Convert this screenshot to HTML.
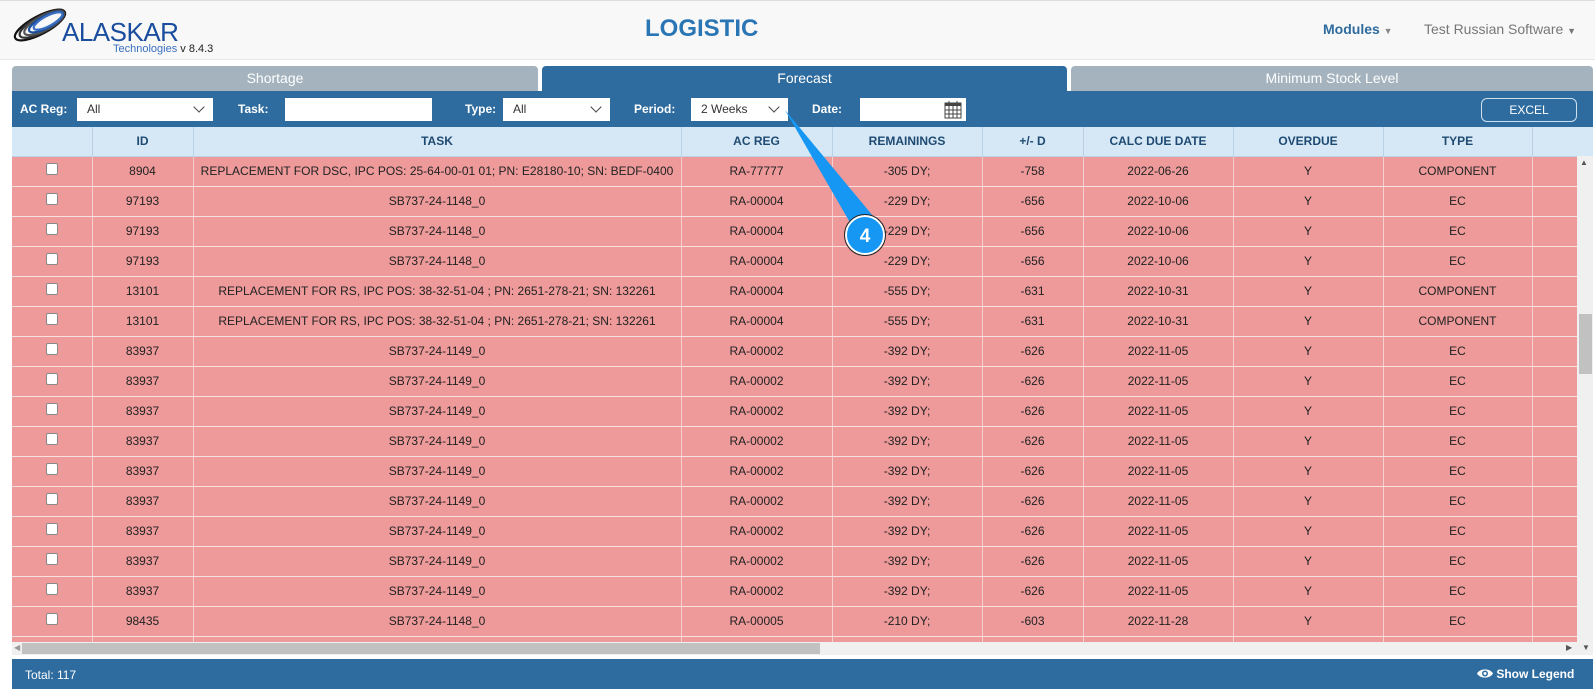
<!DOCTYPE html>
<html><head><meta charset="utf-8"><style>
*{box-sizing:border-box;margin:0;padding:0}
body{width:1595px;height:689px;overflow:hidden;background:#fff;font-family:"Liberation Sans",Arial,sans-serif;position:relative}
.abs{position:absolute}
#hdr{left:0;top:0;width:1595px;height:60px;background:#f8f8f8;border-top:1px solid #ddd;border-bottom:1px solid #e7e7e7}
.tab{top:66px;height:25px;color:#fff;font-size:14px;text-align:center;line-height:25px;border-radius:4px 4px 0 0}
#filt{left:12px;top:91px;width:1581px;height:36px;background:#2e6b9e}
.lbl{color:#fff;font-weight:bold;font-size:12px;top:102px}
.inp{background:#fff;height:23px;top:98px;font-size:12px;line-height:23px;padding-left:10px;color:#333}
.chev{position:absolute;right:10px;top:5px;width:8px;height:8px;border-right:1.5px solid #444;border-bottom:1.5px solid #444;transform:rotate(45deg)}
table{position:absolute;left:12px;top:127px;border-collapse:collapse;table-layout:fixed;width:1565px}
th{background:#d6e8f6;color:#1e4a72;font-size:12px;font-weight:bold;height:29px;border-right:1px solid #b9d2e6;border-bottom:1px solid #b9d2e6}
td{background:#ee9a9a;color:#222;font-size:12px;text-align:center;height:30px;border-right:1px solid #f6d0d0;border-bottom:1px solid #f8e0e0;white-space:nowrap;overflow:hidden}
.cb{display:inline-block;width:12px;height:12px;background:#fff;border:1px solid #888;border-radius:2px;vertical-align:middle;margin-top:-6px}
#foot{left:12px;top:659px;width:1581px;height:30px;background:#2e6b9e;color:#fff;font-size:12px}
</style></head><body>
<div id="hdr" class="abs"></div>
<svg class="abs" style="left:10px;top:6px" width="62" height="38" viewBox="0 0 62 38">
<g fill="none" stroke-width="2.2">
<ellipse cx="30" cy="19" rx="28" ry="9" transform="rotate(-28 30 19)" stroke="#111"/>
<ellipse cx="32" cy="18" rx="25" ry="8" transform="rotate(-28 32 18)" stroke="#333"/>
<ellipse cx="34" cy="17" rx="22" ry="7" transform="rotate(-28 34 17)" stroke="#555"/>
<ellipse cx="36" cy="16" rx="19" ry="6" transform="rotate(-28 36 16)" stroke="#1a4d9e"/>
<ellipse cx="38" cy="15" rx="16" ry="5" transform="rotate(-28 38 15)" stroke="#3a6fc0"/>
</g></svg>
<div class="abs" style="left:62px;top:17px;font-size:26px;color:#1a4d9e;letter-spacing:-0.5px">ALASKAR</div>
<div class="abs" style="left:113px;top:43px;font-size:11px;color:#3a6fc0">Technologies <span style="color:#222;font-size:11px">v 8.4.3</span></div>
<div class="abs" style="left:645px;top:15px;font-size:24px;font-weight:bold;color:#2a75b4">LOGISTIC</div>
<div class="abs" style="left:1323px;top:21px;font-size:14px;font-weight:bold;color:#2e6b9e">Modules <span style="font-size:9px;color:#888">▼</span></div>
<div class="abs" style="left:1424px;top:21px;font-size:14px;color:#777">Test Russian Software <span style="font-size:9px">▼</span></div>

<div class="abs tab" style="left:12px;width:526px;background:#a4b3bd">Shortage</div>
<div class="abs tab" style="left:542px;width:525px;background:#2e6b9e">Forecast</div>
<div class="abs tab" style="left:1071px;width:522px;background:#a4b3bd">Minimum Stock Level</div>
<div id="filt" class="abs"></div>
<div class="abs lbl" style="left:20px">AC Reg:</div>
<div class="abs inp" style="left:77px;width:136px">All<span class="chev"></span></div>
<div class="abs lbl" style="left:238px">Task:</div>
<div class="abs inp" style="left:285px;width:147px"></div>
<div class="abs lbl" style="left:465px">Type:</div>
<div class="abs inp" style="left:503px;width:107px">All<span class="chev"></span></div>
<div class="abs lbl" style="left:634px">Period:</div>
<div class="abs inp" style="left:691px;width:97px">2 Weeks<span class="chev"></span></div>
<div class="abs lbl" style="left:812px">Date:</div>
<div class="abs inp" style="left:860px;width:106px"><svg style="position:absolute;right:4px;top:2px" width="18" height="19" viewBox="0 0 18 19"><rect x="1" y="3" width="16" height="15" fill="#fff" stroke="#444"/><rect x="1" y="3" width="16" height="3" fill="#444"/><path d="M5 1v4M13 1v4M1 10h16M1 14h16M5 6v12M9 6v12M13 6v12" stroke="#444" fill="none"/></svg></div>
<div class="abs" style="left:1481px;top:98px;width:96px;height:24px;border:1px solid #cfe0ee;border-radius:6px;color:#fff;font-size:12px;text-align:center;line-height:22px">EXCEL</div>

<table>
<colgroup><col style="width:80px"><col style="width:101px"><col style="width:488px"><col style="width:151px"><col style="width:150px"><col style="width:101px"><col style="width:150px"><col style="width:150px"><col style="width:149px"><col style="width:45px"></colgroup>
<tr><th></th><th>ID</th><th>TASK</th><th>AC REG</th><th>REMAININGS</th><th>+/- D</th><th>CALC DUE DATE</th><th>OVERDUE</th><th>TYPE</th><th></th></tr>
<tr><td><span class="cb"></span></td><td>8904</td><td>REPLACEMENT FOR DSC, IPC POS: 25-64-00-01 01; PN: E28180-10; SN: BEDF-0400</td><td>RA-77777</td><td>-305 DY;</td><td>-758</td><td>2022-06-26</td><td>Y</td><td>COMPONENT</td><td></td></tr>
<tr><td><span class="cb"></span></td><td>97193</td><td>SB737-24-1148_0</td><td>RA-00004</td><td>-229 DY;</td><td>-656</td><td>2022-10-06</td><td>Y</td><td>EC</td><td></td></tr>
<tr><td><span class="cb"></span></td><td>97193</td><td>SB737-24-1148_0</td><td>RA-00004</td><td>-229 DY;</td><td>-656</td><td>2022-10-06</td><td>Y</td><td>EC</td><td></td></tr>
<tr><td><span class="cb"></span></td><td>97193</td><td>SB737-24-1148_0</td><td>RA-00004</td><td>-229 DY;</td><td>-656</td><td>2022-10-06</td><td>Y</td><td>EC</td><td></td></tr>
<tr><td><span class="cb"></span></td><td>13101</td><td>REPLACEMENT FOR RS, IPC POS: 38-32-51-04 ; PN: 2651-278-21; SN: 132261</td><td>RA-00004</td><td>-555 DY;</td><td>-631</td><td>2022-10-31</td><td>Y</td><td>COMPONENT</td><td></td></tr>
<tr><td><span class="cb"></span></td><td>13101</td><td>REPLACEMENT FOR RS, IPC POS: 38-32-51-04 ; PN: 2651-278-21; SN: 132261</td><td>RA-00004</td><td>-555 DY;</td><td>-631</td><td>2022-10-31</td><td>Y</td><td>COMPONENT</td><td></td></tr>
<tr><td><span class="cb"></span></td><td>83937</td><td>SB737-24-1149_0</td><td>RA-00002</td><td>-392 DY;</td><td>-626</td><td>2022-11-05</td><td>Y</td><td>EC</td><td></td></tr>
<tr><td><span class="cb"></span></td><td>83937</td><td>SB737-24-1149_0</td><td>RA-00002</td><td>-392 DY;</td><td>-626</td><td>2022-11-05</td><td>Y</td><td>EC</td><td></td></tr>
<tr><td><span class="cb"></span></td><td>83937</td><td>SB737-24-1149_0</td><td>RA-00002</td><td>-392 DY;</td><td>-626</td><td>2022-11-05</td><td>Y</td><td>EC</td><td></td></tr>
<tr><td><span class="cb"></span></td><td>83937</td><td>SB737-24-1149_0</td><td>RA-00002</td><td>-392 DY;</td><td>-626</td><td>2022-11-05</td><td>Y</td><td>EC</td><td></td></tr>
<tr><td><span class="cb"></span></td><td>83937</td><td>SB737-24-1149_0</td><td>RA-00002</td><td>-392 DY;</td><td>-626</td><td>2022-11-05</td><td>Y</td><td>EC</td><td></td></tr>
<tr><td><span class="cb"></span></td><td>83937</td><td>SB737-24-1149_0</td><td>RA-00002</td><td>-392 DY;</td><td>-626</td><td>2022-11-05</td><td>Y</td><td>EC</td><td></td></tr>
<tr><td><span class="cb"></span></td><td>83937</td><td>SB737-24-1149_0</td><td>RA-00002</td><td>-392 DY;</td><td>-626</td><td>2022-11-05</td><td>Y</td><td>EC</td><td></td></tr>
<tr><td><span class="cb"></span></td><td>83937</td><td>SB737-24-1149_0</td><td>RA-00002</td><td>-392 DY;</td><td>-626</td><td>2022-11-05</td><td>Y</td><td>EC</td><td></td></tr>
<tr><td><span class="cb"></span></td><td>83937</td><td>SB737-24-1149_0</td><td>RA-00002</td><td>-392 DY;</td><td>-626</td><td>2022-11-05</td><td>Y</td><td>EC</td><td></td></tr>
<tr><td><span class="cb"></span></td><td>98435</td><td>SB737-24-1148_0</td><td>RA-00005</td><td>-210 DY;</td><td>-603</td><td>2022-11-28</td><td>Y</td><td>EC</td><td></td></tr>
<tr><td></td><td></td><td></td><td></td><td></td><td></td><td></td><td></td><td></td><td></td></tr>
</table>
<!-- vertical scrollbar -->
<div class="abs" style="left:1577px;top:127px;width:16px;height:29px;background:#d6e8f6"></div>
<div class="abs" style="left:1577px;top:156px;width:16px;height:499px;background:#f0f0f0"></div>
<div class="abs" style="left:1580px;top:158px;font-size:8px;color:#555">▲</div>
<div class="abs" style="left:1579px;top:314px;width:13px;height:60px;background:#c1c1c1"></div>
<!-- horizontal scrollbar -->
<div class="abs" style="left:12px;top:642px;width:1581px;height:13px;background:#f0f0f0"></div>
<div class="abs" style="left:22px;top:643px;width:798px;height:11px;background:#c1c1c1"></div>
<div class="abs" style="left:14px;top:643px;font-size:8px;color:#999">◀</div>
<div class="abs" style="left:1566px;top:643px;font-size:8px;color:#555">▶</div>
<div class="abs" style="left:1582px;top:643px;font-size:8px;color:#555">▼</div>
<div class="abs" style="left:12px;top:655px;width:1581px;height:4px;background:#fff"></div>
<div id="foot" class="abs"><span style="position:absolute;left:13px;top:9px">Total: 117</span>
<span style="position:absolute;left:1465px;top:8px;font-weight:bold">
<svg width="16" height="11" viewBox="0 0 16 11" style="vertical-align:-1px"><path d="M0 5.5C3 0 13 0 16 5.5C13 11 3 11 0 5.5Z" fill="#fff"/><circle cx="8" cy="5.5" r="3" fill="#2e6b9e"/><circle cx="8" cy="5.5" r="1.5" fill="#fff"/></svg> Show Legend</span></div>
<!-- callout -->
<svg class="abs" style="left:0;top:0" width="1595" height="689">
<path d="M785 110 L873 216 L852 226 Z" fill="#1597f3"/>
<circle cx="865" cy="235" r="19" fill="#1597f3" stroke="#fff" stroke-width="2"/>
<circle cx="865" cy="235" r="20.5" fill="none" stroke="#222" stroke-width="1"/>
<text x="865" y="242" text-anchor="middle" font-family="Liberation Sans" font-weight="bold" font-size="19" fill="#fff">4</text>
</svg>
</body></html>
